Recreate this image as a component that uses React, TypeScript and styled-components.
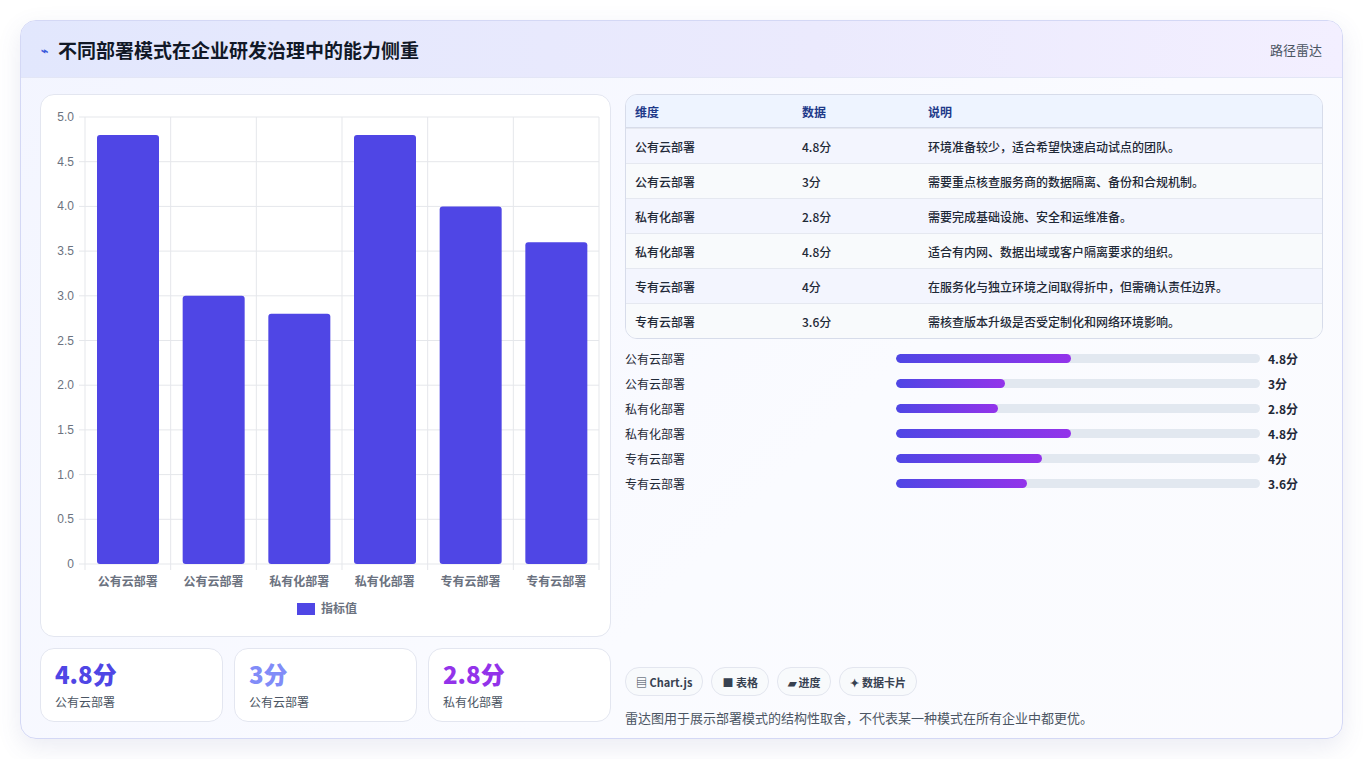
import styled, { createGlobalStyle } from "styled-components";

const rows = [
  { name: "公有云部署", value: 4.8, note: "环境准备较少，适合希望快速启动试点的团队。" },
  { name: "公有云部署", value: 3, note: "需要重点核查服务商的数据隔离、备份和合规机制。" },
  { name: "私有化部署", value: 2.8, note: "需要完成基础设施、安全和运维准备。" },
  { name: "私有化部署", value: 4.8, note: "适合有内网、数据出域或客户隔离要求的组织。" },
  { name: "专有云部署", value: 4, note: "在服务化与独立环境之间取得折中，但需确认责任边界。" },
  { name: "专有云部署", value: 3.6, note: "需核查版本升级是否受定制化和网络环境影响。" },
];

const Global = createGlobalStyle`
  body { margin: 0; background: #fff; font-family: "Noto Sans CJK SC", "Noto Sans", sans-serif; }
`;

const Page = styled.div`
  padding: 20px 20px 20px 20px;
`;

const Card = styled.div`
  border: 1px solid #d4d8f5;
  border-radius: 16px;
  overflow: hidden;
  background: linear-gradient(135deg, #f3f5ff 0%, #fafbff 60%, #fbfbfe 100%);
  box-shadow: 0 8px 24px rgba(80, 90, 160, 0.12);
  height: 719px;
  box-sizing: border-box;
`;

const Header = styled.div`
  height: 56px;
  display: flex;
  align-items: center;
  justify-content: space-between;
  padding: 0 20px;
  background: linear-gradient(90deg, #e2e7fd 0%, #ebeafd 60%, #f3efff 100%);
  border-bottom: 1px solid #e3e6f6;
`;

const Title = styled.h1`
  margin: 0;
  font-size: 19px;
  font-weight: 700;
  color: #111827;
  display: flex;
  align-items: center;
  gap: 10px;
`;

const Bolt = styled.span`
  color: #3b5bdb;
  font-size: 12px;
`;

const HeadLink = styled.span`
  font-size: 13px;
  color: #4b5563;
`;

const Body = styled.div`
  display: grid;
  grid-template-columns: 571px 698px;
  gap: 14px;
  padding: 16px 19px 0 19px;
`;

const LeftCol = styled.div`
  display: flex;
  flex-direction: column;
  gap: 11px;
`;

const ChartBox = styled.div`
  background: #fff;
  border: 1px solid #e3e6f0;
  border-radius: 14px;
  height: 543px;
  box-sizing: border-box;
`;

const Stats = styled.div`
  display: grid;
  grid-template-columns: repeat(3, 1fr);
  gap: 11px;
`;

const Stat = styled.div`
  background: #fff;
  border: 1px solid #e3e6f0;
  border-radius: 14px;
  height: 74px;
  box-sizing: border-box;
  padding: 10px 14px;
`;

const StatValue = styled.div<{ $c: string }>`
  font-size: 24px;
  font-weight: 800;
  color: ${(p) => p.$c};
  line-height: 30px;
`;

const StatLabel = styled.div`
  font-size: 12px;
  color: #4b5563;
  margin-top: 4px;
`;

const RightCol = styled.div`
  display: flex;
  flex-direction: column;
`;

const Table = styled.table`
  width: 100%;
  border-collapse: separate;
  border-spacing: 0;
  border: 1px solid #d7dcea;
  border-radius: 12px;
  overflow: hidden;
  font-size: 12px;
  color: #1f2937;
`;

const Th = styled.th`
  text-align: left;
  font-weight: 700;
  color: #1e3a8a;
  background: #eef4ff;
  height: 32px;
  padding: 0 9px;
  border-bottom: 1px solid #d7dcea;
`;

const Td = styled.td<{ $alt: boolean }>`
  height: 34px;
  padding: 0 9px;
  background: ${(p) => (p.$alt ? "#f8fafc" : "#f3f5fe")};
  border-top: ${(p) => "1px solid #e5e8f0"};
  font-weight: 500;
`;

const Progress = styled.div`
  display: flex;
  flex-direction: column;
  gap: 8px;
  margin-top: 11px;
`;

const PRow = styled.div`
  display: grid;
  grid-template-columns: 263px 364px auto;
  gap: 8px;
  align-items: center;
  font-size: 12px;
  color: #1f2937;
  height: 17px;
`;

const Track = styled.div`
  height: 9px;
  background: #e2e8f0;
  border-radius: 5px;
  overflow: hidden;
`;

const Fill = styled.div`
  height: 100%;
  border-radius: 5px;
  background: linear-gradient(90deg, #4f46e5, #9333ea);
`;

const PValue = styled.span`
  font-weight: 700;
`;

const Chips = styled.div`
  display: flex;
  gap: 8px;
  margin-top: 175px;
`;

const Chip = styled.span`
  border: 1px solid #e3e6ef;
  background: #f8fafc;
  border-radius: 14px;
  height: 27px;
  padding: 0 10px;
  display: inline-flex;
  align-items: center;
  font-size: 11px;
  font-weight: 700;
  color: #374151;
`;

const Note = styled.p`
  margin: 12px 0 0;
  font-size: 13px;
  color: #4b5563;
`;

const BarChart = () => {
  const left = 44;
  const right = 558;
  const top = 22;
  const bottom = 469;
  const cw = (right - left) / 6;
  const unit = (bottom - top) / 5;
  const ticks = ["0", "0.5", "1.0", "1.5", "2.0", "2.5", "3.0", "3.5", "4.0", "4.5", "5.0"];
  return (
    <svg width="569" height="541" style={{ display: "block" }}>
      {ticks.map((t, i) => {
        const y = bottom - i * unit * 0.5;
        return (
          <g key={t}>
            <line x1={left - 6} x2={right} y1={y} y2={y} stroke="#e5e7eb" />
            <text x={33} y={y + 4} textAnchor="end" fontSize="12" fill="#6b7280" fontFamily="Liberation Sans">
              {t}
            </text>
          </g>
        );
      })}
      {Array.from({ length: 7 }).map((_, i) => (
        <line key={i} x1={left + i * cw} x2={left + i * cw} y1={top} y2={bottom + 6} stroke="#e5e7eb" />
      ))}
      {rows.map((r, i) => {
        const h = r.value * unit;
        const x = left + i * cw + 12;
        return (
          <g key={i}>
            <rect x={x} y={bottom - h} width={62} height={h} rx={3} fill="#4f46e5" />
            <text x={left + i * cw + cw / 2} y={491} textAnchor="middle" fontSize="12" fill="#6b7280" fontWeight="700">
              {r.name}
            </text>
          </g>
        );
      })}
      <rect x={256} y={508} width={18} height={12} fill="#4f46e5" />
      <text x={280} y={518} fontSize="12" fill="#6b7280" fontWeight="700">指标值</text>
    </svg>
  );
};

export default function App() {
  return (
    <Page>
      <Global />
      <Card>
        <Header>
          <Title>
            <Bolt>⌁</Bolt>不同部署模式在企业研发治理中的能力侧重
          </Title>
          <HeadLink>路径雷达</HeadLink>
        </Header>
        <Body>
          <LeftCol>
            <ChartBox>
              <BarChart />
            </ChartBox>
            <Stats>
              <Stat>
                <StatValue $c="#4f46e5">4.8分</StatValue>
                <StatLabel>公有云部署</StatLabel>
              </Stat>
              <Stat>
                <StatValue $c="#818cf8">3分</StatValue>
                <StatLabel>公有云部署</StatLabel>
              </Stat>
              <Stat>
                <StatValue $c="#9333ea">2.8分</StatValue>
                <StatLabel>私有化部署</StatLabel>
              </Stat>
            </Stats>
          </LeftCol>
          <RightCol>
            <Table>
              <thead>
                <tr>
                  <Th style={{ width: 149 }}>维度</Th>
                  <Th style={{ width: 108 }}>数据</Th>
                  <Th>说明</Th>
                </tr>
              </thead>
              <tbody>
                {rows.map((r, i) => (
                  <tr key={i}>
                    <Td $alt={i % 2 === 1}>{r.name}</Td>
                    <Td $alt={i % 2 === 1}>{r.value}分</Td>
                    <Td $alt={i % 2 === 1}>{r.note}</Td>
                  </tr>
                ))}
              </tbody>
            </Table>
            <Progress>
              {rows.map((r, i) => (
                <PRow key={i}>
                  <span>{r.name}</span>
                  <Track>
                    <Fill style={{ width: `${r.value * 10}%` }} />
                  </Track>
                  <PValue>{r.value}分</PValue>
                </PRow>
              ))}
            </Progress>
            <Chips>
              <Chip>▤ Chart.js</Chip>
              <Chip>■ 表格</Chip>
              <Chip>▰ 进度</Chip>
              <Chip>✦ 数据卡片</Chip>
            </Chips>
            <Note>雷达图用于展示部署模式的结构性取舍，不代表某一种模式在所有企业中都更优。</Note>
          </RightCol>
        </Body>
      </Card>
    </Page>
  );
}
